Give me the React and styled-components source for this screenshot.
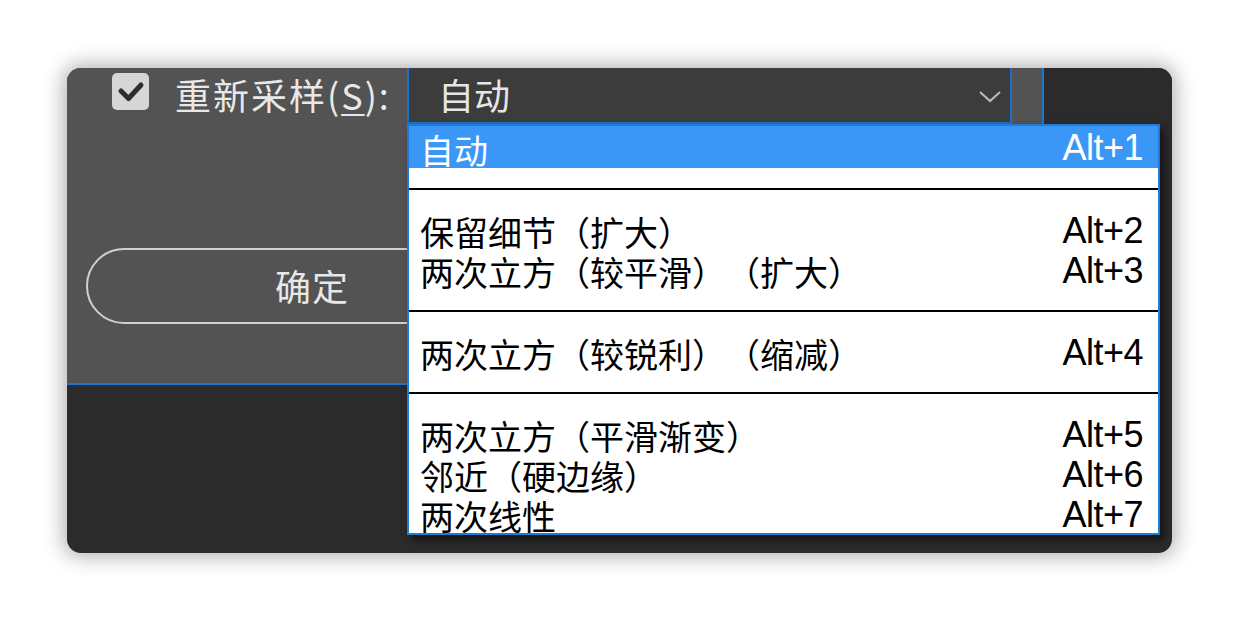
import React from "react";
import styled, { createGlobalStyle } from "styled-components";

const Global = createGlobalStyle`
  html, body { margin: 0; padding: 0; background: #ffffff; width: 1240px; height: 621px; overflow: hidden; }
  * { box-sizing: border-box; text-spacing-trim: space-all; }
`;

const CJK = `"Noto Sans CJK SC", "Noto Sans", sans-serif`;

const Page = styled.div`
  padding: 68px 0 0 67px;
  font-family: ${CJK};
`;

const Window = styled.div`
  position: relative;
  width: 1105px;
  height: 485px;
  border-radius: 14px;
  background: #2b2b2b;
  overflow: hidden;
  box-shadow: 0 0 20px 4px rgba(0, 0, 0, 0.3);
`;

const TopSection = styled.div`
  display: flex;
  height: 317px;
`;

const GrayPanel = styled.div`
  width: 977px;
  height: 317px;
  background: #535353;
  border-right: 2px solid #1e76d0;
  border-bottom: 2px solid #1e76d0;
  display: flex;
  flex-direction: column;
`;

const OptionRow = styled.div`
  display: flex;
  align-items: flex-start;
  height: 57px;
  padding-left: 45px;
`;

const CheckBox = styled.div`
  width: 37px;
  height: 37px;
  margin-top: 5px;
  border-radius: 5px;
  background: #d6d6d6;
  display: flex;
  align-items: center;
  justify-content: center;
`;

const Label = styled.div`
  width: 232px;
  margin-left: 26px;
  color: #e8e8e8;
  font-size: 36px;
  line-height: 52px;
  letter-spacing: 2px;
  white-space: nowrap;
  u { text-decoration-thickness: 2px; text-underline-offset: 4px; }
`;

const SelectBox = styled.div`
  width: 605px;
  height: 57px;
  background: #3c3c3c;
  border-left: 2px solid #1e6fc8;
  border-right: 2px solid #1e6fc8;
  border-bottom: 3px solid #1e6fc8;
  display: flex;
  align-items: flex-start;
  justify-content: space-between;
  padding: 0 8px 0 29px;
  color: #e6e6e6;
  font-size: 36px;
`;

const SelectText = styled.span`
  line-height: 52px;
`;

const Chevron = styled.svg`
  width: 24px;
  height: 14px;
  margin-top: 22px;
`;

const ButtonRow = styled.div`
  padding: 123px 0 0 19px;
`;

const PillButton = styled.div`
  width: 452px;
  height: 76px;
  border: 2px solid #d0d0d0;
  border-radius: 38px;
  display: flex;
  align-items: center;
  justify-content: center;
  color: #e8e8e8;
  font-size: 36px;
  letter-spacing: 1px;
  padding-bottom: 3px;
`;

const DarkArea = styled.div`
  flex: 1;
  background: #2b2b2b;
`;

const Popup = styled.div`
  position: absolute;
  left: 340px;
  top: 56px;
  width: 753px;
  height: 411px;
  background: #ffffff;
  border: 2px solid #1f7ad8;
  box-shadow: 4px 5px 8px rgba(0, 0, 0, 0.55);
  overflow: hidden;
  display: flex;
  flex-direction: column;
`;

const Item = styled.div`
  flex: none;
  display: flex;
  justify-content: space-between;
  align-items: flex-start;
  height: ${(p) => (p.$active ? 42 : 40)}px;
  padding: 0 15px 0 11px;
  background: ${(p) => (p.$active ? "#3a97f6" : "transparent")};
  color: ${(p) => (p.$active ? "#ffffff" : "#000000")};
`;

const ItemText = styled.span`
  font-family: ${CJK};
  font-size: 34px;
  line-height: 40px;
  margin-top: ${(p) => (p.$active ? 4 : 2)}px;
  white-space: nowrap;
`;

const Shortcut = styled.span`
  font-family: "Liberation Sans", Arial, sans-serif;
  font-size: 36px;
  line-height: 40px;
  letter-spacing: -0.5px;
  margin-top: ${(p) => (p.$active ? 2 : 1)}px;
`;

const Separator = styled.div`
  flex: none;
  height: 42px;
  display: flex;
  align-items: center;
  &::after {
    content: "";
    display: block;
    width: 100%;
    height: 2px;
    background: #000;
  }
`;

const groups = [
  [["自动", "Alt+1", true]],
  [
    ["保留细节（扩大）", "Alt+2"],
    ["两次立方（较平滑）（扩大）", "Alt+3"],
  ],
  [["两次立方（较锐利）（缩减）", "Alt+4"]],
  [
    ["两次立方（平滑渐变）", "Alt+5"],
    ["邻近（硬边缘）", "Alt+6"],
    ["两次线性", "Alt+7"],
  ],
];

export default function App() {
  return (
    <Page>
      <Global />
      <Window>
        <TopSection>
          <GrayPanel>
            <OptionRow>
              <CheckBox>
                <svg width="37" height="37" viewBox="0 0 37 37">
                  <path d="M9 18 L16.5 25.5 L29 12" fill="none" stroke="#2e2e2e" strokeWidth="5" strokeLinecap="round" strokeLinejoin="round" />
                </svg>
              </CheckBox>
              <Label>
                重新采样(<u>S</u>):
              </Label>
              <SelectBox>
                <SelectText>自动</SelectText>
                <Chevron viewBox="0 0 24 14">
                  <path d="M2 2 L12 11 L22 2" fill="none" stroke="#b8b8b8" strokeWidth="2.2" />
                </Chevron>
              </SelectBox>
            </OptionRow>
            <ButtonRow>
              <PillButton>确定</PillButton>
            </ButtonRow>
          </GrayPanel>
          <DarkArea />
        </TopSection>
        <Popup>
          {groups.map((g, gi) => (
            <React.Fragment key={gi}>
              {gi > 0 && <Separator />}
              {g.map(([label, key, active]) => (
                <Item key={key} $active={active}>
                  <ItemText $active={active}>{label}</ItemText>
                  <Shortcut $active={active}>{key}</Shortcut>
                </Item>
              ))}
            </React.Fragment>
          ))}
        </Popup>
      </Window>
    </Page>
  );
}
